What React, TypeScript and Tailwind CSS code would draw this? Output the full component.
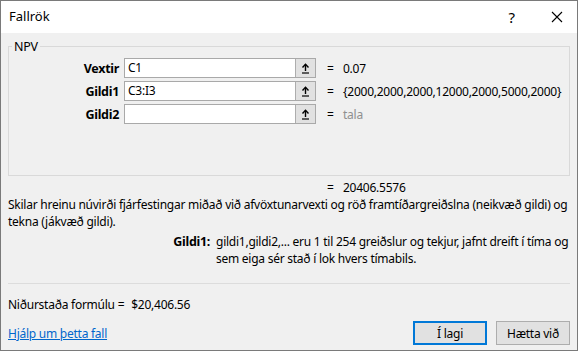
import React from "react";

const font = { fontFamily: '"Noto Sans", "Open Sans", sans-serif' };

function RefButton() {
  return (
    <div className="w-[20px] h-full bg-[#e1e1e1] border-l border-[#adadad] flex items-center justify-center">
      <svg width="9" height="11" viewBox="0 0 9 11">
        <path d="M4.5 1.5 V8" stroke="#000" strokeWidth="1.4" />
        <path d="M1.5 4.5 L4.5 1.3 L7.5 4.5" stroke="#000" strokeWidth="1.4" fill="none" />
        <path d="M1 10 H8" stroke="#000" strokeWidth="1.2" />
      </svg>
    </div>
  );
}

function Row({ label, value, result, muted }: { label: string; value: string; result: string; muted?: boolean }) {
  return (
    <div className="flex items-center h-[20px]">
      <div className="w-[110px] text-right font-bold text-[12.5px] tracking-[-0.3px] text-black">{label}</div>
      <div className="ml-[5px] w-[192px] h-[20px] bg-white border border-[#a9a9a9] flex">
        <div className="flex-1 pl-[3px] text-[12px] leading-[18px] tracking-[-0.25px] text-black">{value}</div>
        <RefButton />
      </div>
      <div className="ml-[11px] w-[16px]">=</div>
      <div className={muted ? "text-[#8f8f8f]" : "text-black"}>{result}</div>
    </div>
  );
}

export default function App() {
  return (
    <div style={font} className="w-[578px] h-[351px] border border-[#7a7a7a] bg-[#f0f0f0] flex flex-col text-black overflow-hidden">
      <div className="h-[32px] bg-white flex items-center pl-[8px] pr-[14px] shrink-0">
        <div className="text-[13px] flex-1">Fallrök</div>
        <div className="text-[15px] mr-[36px]">?</div>
        <svg width="12" height="12" viewBox="0 0 12 12">
          <path d="M1 1 L11 11 M11 1 L1 11" stroke="#000" strokeWidth="1.1" />
        </svg>
      </div>
      <div className="flex flex-col px-[7px] text-[12px] leading-[17px] tracking-[-0.25px]">
        <div className="relative mt-[13px] h-[130px] border border-[#d9d9d9] flex flex-col gap-[3px] pt-[11px]">
          <span className="absolute left-[3px] top-[-9px] px-[2px] bg-[#f0f0f0] text-[12.5px] leading-[17px]">NPV</span>
          <Row label="Vextir" value="C1" result="0.07" />
          <Row label="Gildi1" value="C3:I3" result="{2000,2000,2000,12000,2000,5000,2000}" />
          <Row label="Gildi2" value="" result="tala" muted />
        </div>
        <div className="flex mt-[3px]">
          <div className="w-[319px]" />
          <div className="w-[16px]">=</div>
          <div>20406.5576</div>
        </div>
        <div>
          Skilar hreinu núvirði fjárfestingar miðað við afvöxtunarvexti og röð framtíðargreiðslna (neikvæð gildi) og tekna (jákvæð gildi).
        </div>
        <div className="flex mt-[3px]">
          <div className="w-[202px] shrink-0 text-right font-bold text-[12.5px] tracking-[-0.3px]">Gildi1:</div>
          <div className="pl-[6px]">gildi1,gildi2,... eru 1 til 254 greiðslur og tekjur, jafnt dreift í tíma og sem eiga sér stað í lok hvers tímabils.</div>
        </div>
        <div className="mt-[16px] h-px bg-[#dcdcdc]" />
        <div className="mt-[12px] flex">
          <span>Niðurstaða formúlu =</span>
          <span className="ml-[7px]">$20,406.56</span>
        </div>
        <div className="mt-[8px] flex items-center">
          <a className="flex-1 text-[#0066cc] underline">Hjálp um þetta fall</a>
          <div className="w-[74px] h-[24px] border-2 border-[#0078d7] bg-[#e1e1e1] flex items-center justify-center">Í lagi</div>
          <div className="ml-[9px] w-[74px] h-[24px] border border-[#adadad] bg-[#e1e1e1] flex items-center justify-center">Hætta við</div>
        </div>
      </div>
    </div>
  );
}
